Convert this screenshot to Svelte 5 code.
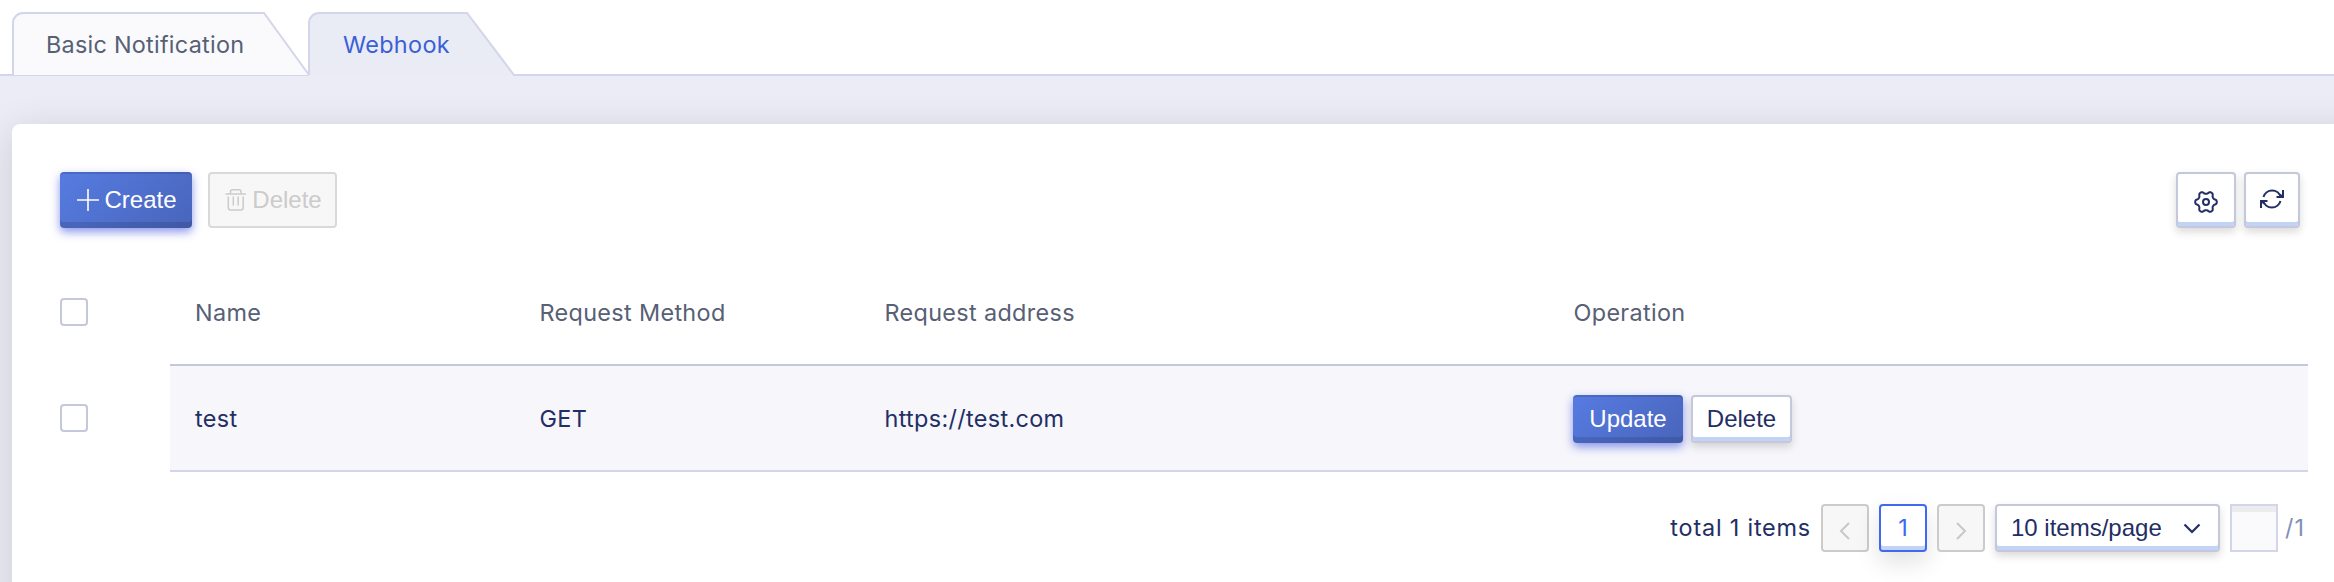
<script>
  const columns = ['Name', 'Request Method', 'Request address', 'Operation'];
  const rows = [{ name: 'test', method: 'GET', address: 'https://test.com' }];

  // Six-lobed outline of the settings icon
  const gear =
    'M' +
    Array.from({ length: 72 }, (_, i) => {
      const a = (i * Math.PI) / 36;
      const r = 9.5 + 1.35 * Math.tanh(1.8 * Math.cos(6 * a));
      return `${(12 + r * Math.cos(a)).toFixed(2)} ${(12 + r * Math.sin(a)).toFixed(2)}`;
    }).join('L') +
    'Z';
</script>

<div class="page">
  <nav class="tabs">
    <div class="tab first">
      <svg class="shape" width="300" height="64" viewBox="0 0 300 64">
        <path d="M1 63V11a10 10 0 0 1 10-10H252L297 63" fill="#fafafd" stroke="#d3d5ea" stroke-width="2" />
      </svg>
      <span>Basic Notification</span>
    </div>
    <div class="tab second">
      <svg class="shape" width="210" height="64" viewBox="0 0 210 64">
        <path d="M0 64L1 63V11a10 10 0 0 1 10-10H159L206 64Z" fill="#eaecf5" />
        <path d="M1 63V11a10 10 0 0 1 10-10H159L206 63H210" fill="none" stroke="#d3d5ea" stroke-width="2" />
      </svg>
      <span>Webhook</span>
    </div>
  </nav>

  <main class="body">
    <section class="card">
      <div class="toolbar">
        <button class="btn primary create">
          <svg width="22" height="22" viewBox="0 0 22 22"><path d="M11 0V22M0 11H22" stroke="#fff" stroke-width="1.6" /></svg>
          <span>Create</span>
        </button>
        <button class="btn disabled remove">
          <svg width="22" height="22" viewBox="0 0 22 22" fill="none" stroke="#cbcbcb" stroke-width="1.5">
            <path d="M.5 5H21M5.500 5V2.800Q5.500 .8 7.500 .8H14Q16 .8 16 2.800V5M3.300 7.500V18.500Q3.300 21 5.800 21H15.700Q18.200 21 18.200 18.500V7.500M8.300 7.500V16.500M13.200 7.500V16.500" />
          </svg>
          <span>Delete</span>
        </button>
        <div class="tools">
          <button class="btn plain gear" aria-label="Settings">
            <svg width="24" height="24" viewBox="0 0 24 24" fill="none" stroke="#232e64" stroke-width="2" stroke-linejoin="round">
              <path d={gear} />
              <circle cx="12" cy="12" r="3" />
            </svg>
          </button>
          <button class="btn plain refresh" aria-label="Refresh">
            <svg width="24" height="20" viewBox="0 0 24 20" fill="none" stroke="#232e64" stroke-width="2">
              <path d="M3.500 8A9 9 0 0 1 20.800 8M23 1V8H16.500M23 8L18.500 4.500M20.500 12A9 9 0 0 1 3.200 12M1 19V12H7.500M1 12L5.500 15.500" />
            </svg>
          </button>
        </div>
      </div>

      <div class="table">
        <div class="row head">
          <div class="check"><i class="box"></i></div>
          <div class="cells">
            {#each columns as c}<span>{c}</span>{/each}
          </div>
        </div>
        {#each rows as r}
          <div class="row">
            <div class="check"><i class="box"></i></div>
            <div class="cells data">
              <span>{r.name}</span>
              <span>{r.method}</span>
              <span>{r.address}</span>
              <div class="ops">
                <button class="btn primary small update">Update</button>
                <button class="btn plain small del">Delete</button>
              </div>
            </div>
          </div>
        {/each}
      </div>

      <div class="pager">
        <span class="total">total 1 items</span>
        <button class="btn disabled page-btn" aria-label="Previous">
          <svg width="12" height="18" viewBox="0 0 12 18"><path d="M10 1L2 9L10 17" fill="none" stroke="#c8c8c8" stroke-width="2" /></svg>
        </button>
        <button class="btn plain page-btn current">1</button>
        <button class="btn disabled page-btn" aria-label="Next">
          <svg width="12" height="18" viewBox="0 0 12 18"><path d="M2 1L10 9L2 17" fill="none" stroke="#c8c8c8" stroke-width="2" /></svg>
        </button>
        <button class="btn plain select">
          <span>10 items/page</span>
          <svg width="18" height="11" viewBox="0 0 18 11"><path d="M1.500 1.500L9 9L16.500 1.500" fill="none" stroke="#232e64" stroke-width="2.200" /></svg>
        </button>
        <div class="jump"></div>
        <span class="count">/1</span>
      </div>
    </section>
  </main>
</div>

<style>
  :global(body) { margin: 0; }
  .page {
    box-sizing: border-box;
    height: 582px;
    overflow: hidden;
    background: #fff;
    font: 23.4px/32px Inter, sans-serif;
    letter-spacing: 0.34px;
    color: #232e64;
    display: flex;
    flex-direction: column;
  }
  .page * { box-sizing: border-box; }
  .tabs {
    height: 76px;
    flex: none;
    padding: 12px 0 0 12px;
    display: flex;
    border-bottom: 2px solid #d3d5ea;
    position: relative;
    z-index: 1;
  }
  .tab { position: relative; height: 64px; padding: 17px 0 0 34px; color: #576075; }
  .tab span { position: relative; white-space: nowrap; }
  .first { width: 296px; letter-spacing: 0.26px; }
  .second { width: 206px; padding-left: 35px; color: #3a60d7; }
  .shape { position: absolute; left: 0; top: 0; display: block; }
  .body { flex: 1; background: #ebecf5; padding: 48px 0 0 12px; display: flex; overflow: hidden; }
  .card {
    flex: none;
    width: 2360px;
    height: 600px;
    background: #fff;
    border-radius: 8px;
    padding: 48px 64px 0 48px;
    box-shadow: 0 8px 40px rgba(0, 0, 0, 0.14);
  }
  .toolbar { display: flex; gap: 16px; width: 2240px; }
  .tools { margin-left: auto; display: flex; gap: 8px; }
  .btn {
    margin: 0;
    padding: 0;
    height: 56px;
    border-radius: 4px;
    font: 24px/28px "Liberation Sans", Arial, sans-serif;
    letter-spacing: 0;
    display: flex;
    align-items: center;
    justify-content: center;
    white-space: nowrap;
  }
  .btn svg { display: block; flex: none; }
  .primary {
    border: 0;
    color: #fff;
    background: linear-gradient(135deg, #567be1, #4965bb);
    box-shadow: inset 0 -6px rgba(0, 0, 0, 0.12), inset 0 2px rgba(0, 0, 0, 0.12), 0 4px 10px rgba(63, 82, 224, 0.6);
  }
  .plain {
    border: 2px solid #c4c8da;
    background: #fff;
    color: #232e64;
    box-shadow: inset 0 -4px #c3d3f5, 0 4px 8px rgba(0, 0, 0, 0.15);
  }
  .disabled { border: 2px solid #d9d9d9; background: #f7f7f7; color: #cbcbcb; }
  .create { width: 132px; gap: 5px; padding-left: 2px; }
  .remove { width: 129px; gap: 5px; padding-left: 2px; }
  .gear { width: 60px; padding-top: 4px; }
  .refresh { width: 56px; padding-bottom: 2px; }
  .table { padding-top: 50px; }
  .row { display: flex; height: 106px; }
  .row.head { height: 88px; }
  .check { width: 110px; flex: none; display: flex; align-items: center; padding-bottom: 2px; }
  .head .check { align-items: flex-start; padding: 20px 0 0; }
  .box { width: 28px; height: 28px; border: 2px solid #c4c8da; border-radius: 4px; background: #fff; }
  .cells {
    width: 2138px;
    flex: none;
    padding-left: 25px;
    display: grid;
    grid-template-columns: 344.5px 345px 689px 1fr;
    align-items: center;
    border-bottom: 2px solid #c4c8da;
  }
  .head .cells { align-items: start; padding-top: 19px; color: #576075; }
  .data { background: #f6f6fb; border-bottom-color: #d3d5ea; }
  .data span { padding-top: 2px; }
  .ops { display: flex; gap: 8px; padding-top: 2px; margin-left: -0.5px; }
  .small { height: 48px; padding-bottom: 1px; }
  .update { width: 110px; }
  .del { width: 101px; }
  .pager { width: 2246px; padding-top: 32px; display: flex; align-items: center; justify-content: flex-end; }
  .total { margin-right: 10px; letter-spacing: 0.8px; }
  .page-btn { width: 48px; height: 48px; margin-right: 10px; border-color: #cbcbcb; }
  .page-btn svg { margin-top: 6px; }
  .current {
    border-color: #4068f0;
    color: #4068f0;
    font: 23.4px/28px Inter, sans-serif;
    box-shadow: inset 0 -4px #c3d3f5, 0 10px 24px rgba(0, 0, 0, 0.12);
  }
  .select { width: 225px; height: 48px; padding: 0 17px 0 14px; margin-right: 10px; justify-content: space-between; }
  .jump { width: 48px; height: 48px; border: 2px solid #d3d5ea; background: #fafafd; box-shadow: inset 0 6px #ececef; margin-right: 7px; }
  .count { color: #8390b4; width: 21px; letter-spacing: 1px; }
</style>
